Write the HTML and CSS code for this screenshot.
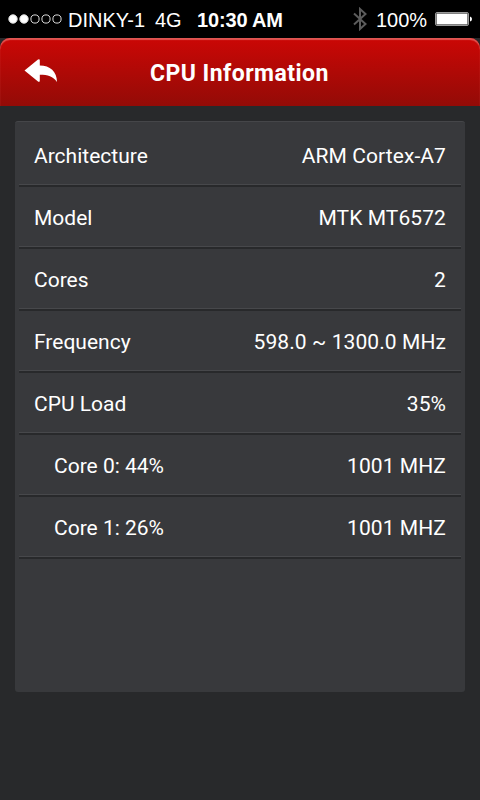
FILE: index.html
```
<!DOCTYPE html>
<html lang="en">
<head>
    <meta charset="UTF-8">
    <meta name="viewport" content="width=device-width, initial-scale=1.0">
    <title>CPU Information</title>
    <link rel="stylesheet" href="styles.css">
</head>
<body>
    <div class="status-bar">
        <svg class="signal" width="54" height="12" viewBox="0 0 54 12">
            <circle cx="5" cy="6" r="4.2" fill="#fff"/>
            <circle cx="16" cy="6" r="4.2" fill="#fff"/>
            <circle cx="27" cy="6" r="4.1"/>
            <circle cx="38" cy="6" r="4.1"/>
            <circle cx="49" cy="6" r="4.1"/>
        </svg>
        <span class="carrier">DINKY-1</span>
        <span class="network">4G</span>
        <span class="time">10:30 AM</span>
        <svg class="bluetooth" width="14" height="24" viewBox="0 0 14 24">
            <path d="M1 6.5 L12.5 17 L7 22 V2 L12.5 7 L1 17.5"/>
        </svg>
        <span class="percent">100%</span>
        <svg class="battery" width="38" height="14" viewBox="0 0 38 14">
            <rect x="0.5" y="0.5" width="33" height="13" rx="1.5" fill="none" stroke="#999"/>
            <rect x="1.5" y="1.5" width="31" height="11" fill="#fff"/>
            <path d="M35 4.5 Q37 5 37 7 Q37 9 35 9.5 Z" fill="#fff"/>
        </svg>
    </div>

    <div class="header-wrap">
        <header class="header">
            <a class="back" href="#" aria-label="Back">
                <svg width="34" height="26" viewBox="0 0 34 26">
                    <path d="M0.5 11.5 L14 0.6 Q15.8 -0.4 15.8 1.6 V6.4 C26 6.4 33 12.5 33 23 C29 17.5 24 15.8 15.8 15.8 V21.6 Q15.8 23.6 14 22.6 Z" fill="#fff"/>
                </svg>
            </a>
            <h1>CPU Information</h1>
        </header>
    </div>

    <div class="panel">
        <div class="row"><span class="label">Architecture</span><span class="value">ARM Cortex-A7</span></div>
        <div class="row"><span class="label">Model</span><span class="value">MTK MT6572</span></div>
        <div class="row"><span class="label">Cores</span><span class="value">2</span></div>
        <div class="row"><span class="label">Frequency</span><span class="value">598.0 ~ 1300.0 MHz</span></div>
        <div class="row"><span class="label">CPU Load</span><span class="value">35%</span></div>
        <div class="row sub"><span class="label">Core 0: 44%</span><span class="value">1001 MHZ</span></div>
        <div class="row sub"><span class="label">Core 1: 26%</span><span class="value">1001 MHZ</span></div>
    </div>
</body>
</html>
```

FILE: styles.css
```
* {
    box-sizing: border-box;
}

body {
    margin: 0;
    height: 800px;
    overflow: hidden;
    font-family: Roboto, sans-serif;
    background: #28292b;
    color: white;
}

/* status bar */
.status-bar {
    display: flex;
    align-items: center;
    height: 38px;
    padding-left: 8px;
    background: black;
    font-family: "Liberation Sans", sans-serif;
    font-size: 20px;
    line-height: 38px;
    white-space: nowrap;
}

.status-bar svg,
.status-bar span {
    flex: none;
}

.status-bar span {
    padding-top: 2px;
}

.signal {
    fill: none;
    stroke: #ddd;
    stroke-width: 1;
}

.carrier {
    width: 87px;
    padding-left: 6px;
}

.network {
    width: 48px;
    padding-left: 6px;
}

.time {
    width: 156px;
    font-weight: bold;
    letter-spacing: -0.15px;
}

.bluetooth {
    fill: none;
    stroke: #5c5c5c;
    stroke-width: 2;
}

.percent {
    width: 68px;
    padding-left: 9px;
}

/* header */
.header-wrap {
    height: 68px;
    background: #28292b;
}

.header {
    display: flex;
    align-items: center;
    height: 68px;
    border-radius: 10px 10px 0 0;
    background: linear-gradient(#cb0705, #930b07);
    box-shadow: inset 0 2px 1px #e05552;
}

.back {
    display: flex;
    width: 150px;
    padding-left: 24px;
}

h1 {
    margin: 0;
    padding-top: 3px;
    font-size: 23px;
    font-weight: bold;
    line-height: 28px;
    letter-spacing: 0.45px;
    white-space: nowrap;
}

/* info list */
.panel {
    height: 571px;
    margin: 15px 15px 0;
    padding: 3px 4px 0;
    border-top: 1px solid #454649;
    border-radius: 3px;
    background: #38393c;
}

.row {
    display: flex;
    justify-content: space-between;
    align-items: center;
    height: 62px;
    padding: 1px 15px 0;
    border-bottom: 2px solid #28292b;
    box-shadow: inset 0 -1px #47484b;
    font-size: 21px;
    white-space: nowrap;
}

.value {
    letter-spacing: 0.08px;
}

.sub {
    padding-left: 35px;
}
```
